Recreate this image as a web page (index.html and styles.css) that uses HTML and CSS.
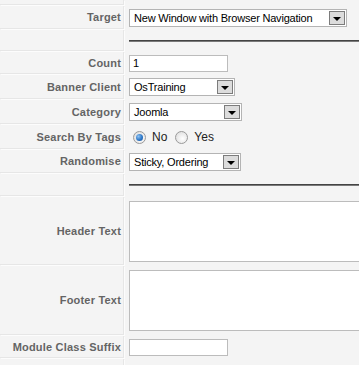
FILE: index.html
```html
<!DOCTYPE html>
<html lang="en">
<head>
    <meta charset="UTF-8">
    <meta name="viewport" content="width=device-width, initial-scale=1.0">
    <title>Module Parameters</title>
    <link rel="stylesheet" href="styles.css">
</head>
<body>
    <div class="paramlist">
        <div class="key"></div>
        <div class="value"></div>

        <div class="key">Target</div>
        <div class="value">
            <div class="select w-target">
                <span class="select-text">New Window with Browser Navigation</span>
                <span class="select-btn"></span>
            </div>
        </div>

        <div class="key"></div>
        <div class="value"><div class="spacer"></div></div>

        <div class="key">Count</div>
        <div class="value"><div class="input">1</div></div>

        <div class="key">Banner Client</div>
        <div class="value">
            <div class="select w-client">
                <span class="select-text">OsTraining</span>
                <span class="select-btn"></span>
            </div>
        </div>

        <div class="key">Category</div>
        <div class="value">
            <div class="select w-category">
                <span class="select-text">Joomla</span>
                <span class="select-btn"></span>
            </div>
        </div>

        <div class="key">Search By Tags</div>
        <div class="value">
            <label class="radio"><span class="radio-dot checked"></span>No</label>
            <label class="radio"><span class="radio-dot"></span>Yes</label>
        </div>

        <div class="key">Randomise</div>
        <div class="value">
            <div class="select w-random">
                <span class="select-text">Sticky, Ordering</span>
                <span class="select-btn"></span>
            </div>
        </div>

        <div class="key"></div>
        <div class="value"><div class="spacer"></div></div>

        <div class="key">Header Text</div>
        <div class="value"><div class="textarea"></div></div>

        <div class="key">Footer Text</div>
        <div class="value"><div class="textarea"></div></div>

        <div class="key">Module Class Suffix</div>
        <div class="value"><div class="input"></div></div>

        <div class="key"></div>
        <div class="value"></div>
    </div>
</body>
</html>
```
FILE: styles.css
```css
html, body {
    margin: 0;
    padding: 0;
    background-color: #f4f4f4;
    overflow: hidden;
}
body {
    font-family: "Liberation Sans", Arial, sans-serif;
    font-size: 11px;
    color: #000;
}
.paramlist {
    display: grid;
    grid-template-columns: 124px 1fr;
    grid-template-rows: 5px 23px 21px 22px 24px 24px 24px 23px 22px 68px 69px 22px 20px;
    column-gap: 1px;
    row-gap: 1px;
}
.key {
    box-sizing: border-box;
    background: #f4f4f4;
    border-right: 1px solid #e6e6e6;
    border-bottom: 1px solid #e6e6e6;
    box-shadow: 1px 1px 0 #fcfcfc;
    color: #646464;
    font-weight: bold;
    letter-spacing: 0.2px;
    white-space: nowrap;
    display: flex;
    align-items: center;
    justify-content: flex-end;
    padding-right: 2px;
}
.value {
    display: flex;
    align-items: center;
    padding-left: 4px;
}
.spacer {
    flex: 1;
    border-top: 1px solid #444;
    border-bottom: 1px solid #7a7a7a;
}
.select {
    box-sizing: border-box;
    height: 18px;
    border: 1px solid #b4b4b4;
    background: #fff;
    display: flex;
    align-items: center;
    padding: 1px 1px 1px 4px;
}
.w-target { width: 218px; }
.w-client { width: 106px; }
.w-category { width: 113px; }
.w-random { width: 112px; }
.select-text {
    flex: 1;
    white-space: nowrap;
    letter-spacing: -0.2px;
}
.select-btn {
    box-sizing: border-box;
    width: 16px;
    height: 14px;
    background: #dcdcdc;
    border: 1px solid #7c7c7c;
    position: relative;
}
.select-btn::after {
    content: "";
    position: absolute;
    left: 3px;
    top: 5px;
    border-left: 4px solid transparent;
    border-right: 4px solid transparent;
    border-top: 4px solid #000;
}
.input {
    box-sizing: border-box;
    width: 99px;
    height: 17px;
    border: 1px solid #bcbcbc;
    background: #fff;
    padding-left: 3px;
    line-height: 15px;
}
.textarea {
    box-sizing: border-box;
    flex: 1;
    height: 61px;
    border: 1px solid #bcbcbc;
    border-right: 0;
    background: #fff;
}
.radio {
    display: flex;
    align-items: center;
    font-size: 12px;
    color: #222;
    margin-left: 4px;
    margin-right: 4px;
}
.radio-dot {
    box-sizing: border-box;
    width: 13px;
    height: 13px;
    border-radius: 50%;
    border: 1px solid #9a9a9a;
    background: radial-gradient(circle at 60% 60%, #fff 0, #e4e4e4 70%, #cfcfcf 100%);
    margin-right: 6px;
    position: relative;
}
.radio-dot.checked::after {
    content: "";
    position: absolute;
    left: 2px;
    top: 2px;
    width: 7px;
    height: 7px;
    border-radius: 50%;
    background: radial-gradient(circle at 35% 35%, #8ec2f2 0, #2e78c8 55%, #1a4f94 100%);
}
```
